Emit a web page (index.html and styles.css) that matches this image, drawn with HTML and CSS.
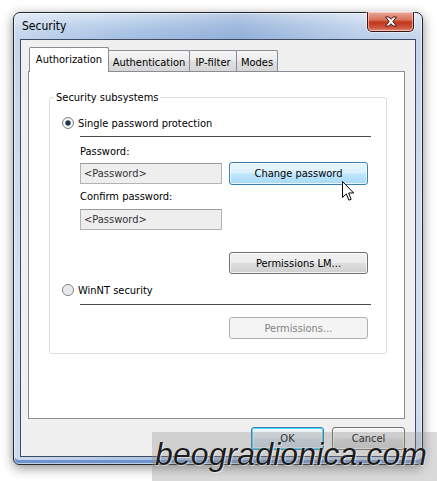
FILE: index.html
```html
<!DOCTYPE html>
<html>
<head>
<meta charset="utf-8">
<link rel="stylesheet" href="styles.css">
</head>
<body>
<div class="window">
  <div class="titlebar">
    <span class="title">Security</span>
    <div class="close">
      <svg width="14" height="11" viewBox="0 0 14 11"><path d="M1.5 1 H5 L7 3.3 L9 1 H12.5 L8.8 5.5 L12.5 10 H9 L7 7.7 L5 10 H1.5 L5.2 5.5 Z" fill="#fff" stroke="#4a1a12" stroke-width="1" stroke-linejoin="round"/></svg>
    </div>
  </div>
  <div class="client">
    <div class="tabs">
      <div class="tab active">Authorization</div>
      <div class="tab w-auth">Authentication</div>
      <div class="tab w-ip">IP-filter</div>
      <div class="tab w-modes">Modes</div>
    </div>
    <div class="panel">
      <fieldset class="group">
        <legend>Security subsystems</legend>
        <div class="radio-row first">
          <svg class="radio" width="12" height="12" viewBox="0 0 12 12"><circle cx="6" cy="6" r="5.5" fill="#f3f3f3" stroke="#7d7f82"/><circle cx="6" cy="6" r="3.6" fill="#fff"/><circle cx="6" cy="6" r="2.7" fill="#1f3550"/></svg>
          <span>Single password protection</span>
        </div>
        <div class="sep"></div>
        <div class="sub">
          <div class="label l1">Password:</div>
          <div class="input i1">&lt;Password&gt;</div>
          <button class="btn hover b1">Change password</button>
          <div class="label l2">Confirm password:</div>
          <div class="input i2">&lt;Password&gt;</div>
          <button class="btn b2">Permissions LM...</button>
        </div>
        <div class="radio-row second">
          <svg class="radio" width="12" height="12" viewBox="0 0 12 12"><circle cx="6" cy="6" r="5.5" fill="#f1f1f1" stroke="#7d7f82"/><circle cx="6" cy="6" r="3.8" fill="#e6e6e6"/></svg>
          <span>WinNT security</span>
        </div>
        <div class="sep sep2"></div>
        <button class="btn disabled b3">Permissions...</button>
      </fieldset>
    </div>
    <div class="footer">
      <button class="btn default small">OK</button>
      <button class="btn small">Cancel</button>
    </div>
  </div>
</div>
<svg class="cursor" width="13" height="21" viewBox="0 0 13 21"><path d="M0.5 0.5 V16.5 L4.3 12.9 L6.9 19.2 L9.2 18.2 L6.6 12 H11.7 Z" fill="#fff" stroke="#000" stroke-width="1" stroke-linejoin="miter"/></svg>
<div class="watermark"><span>beogradionica.com</span></div>
</body>
</html>
```

FILE: styles.css
```css
html, body {
  margin: 0;
}
body {
  width: 437px;
  height: 481px;
  box-sizing: border-box;
  padding: 12px 0 0 13px;
  background: #fff;
  font-family: "DejaVu Sans Condensed", "DejaVu Sans", sans-serif;
  font-size: 11px;
  color: #000;
  position: relative;
  overflow: hidden;
}
.window {
  width: 410px;
  height: 453px;
  box-sizing: border-box;
  border: 1px solid #23282f;
  border-radius: 7px 7px 6px 6px;
  padding: 0 6px 7px 6px;
  display: flex;
  flex-direction: column;
  background:
    linear-gradient(90deg, rgba(255,255,255,0.35) 0%, rgba(255,255,255,0) 25%, rgba(60,100,170,0.18) 55%, rgba(255,255,255,0.2) 85%, rgba(255,255,255,0.35) 100%),
    linear-gradient(180deg, #d6e3f3 0px, #b4cbe8 14px, #a6c0e3 26px, #bcd0ea 60%, #b2c8e7 100%);
  box-shadow: 0 3px 12px rgba(0,0,0,0.45), inset 0 0 0 1px rgba(255,255,255,0.55), inset 0 -4px 0 #6f94cd;
}
.titlebar {
  height: 26px;
  display: flex;
  justify-content: space-between;
  align-items: flex-start;
  padding-left: 2px;
}
.title {
  line-height: 26px;
  font-size: 12px;
  color: #000;
}
.close {
  width: 47px;
  height: 20px;
  box-sizing: border-box;
  margin-top: -1px;
  margin-right: 2px;
  border: 1px solid #3b1610;
  border-top: none;
  border-radius: 0 0 5px 5px;
  background: linear-gradient(180deg, #e9a99a 0%, #d9735d 40%, #c2361b 55%, #cf5a42 85%, #e39a88 100%);
  box-shadow: inset 0 0 0 1px rgba(255,220,210,0.6), 0 0 0 1px rgba(255,255,255,0.5);
  display: flex;
  align-items: center;
  justify-content: center;
}
.client {
  height: 418px;
  box-sizing: border-box;
  border: 1px solid #3e4c63;
  background: #f0f0f0;
  padding: 7px 10px 0 7px;
  display: flex;
  flex-direction: column;
}
.tabs {
  height: 24px;
  display: flex;
  align-items: flex-end;
  padding-left: 1px;
}
.tab {
  box-sizing: border-box;
  height: 21px;
  border: 1px solid #898c95;
  border-bottom: none;
  border-radius: 2px 2px 0 0;
  background: linear-gradient(180deg, #f6f6f6 0%, #ececec 45%, #dedede 55%, #d6d6d6 100%);
  display: flex;
  align-items: center;
  justify-content: center;
  padding-top: 2px;
  margin-right: -1px;
}
.tab.active {
  width: 80px;
  height: 25px;
  margin-bottom: -1px;
  background: #fff;
  position: relative;
  z-index: 1;
  padding-top: 0;
  padding-bottom: 2px;
}
.w-auth { width: 82px; }
.w-ip { width: 48px; }
.w-modes { width: 42px; }
.panel {
  height: 348px;
  box-sizing: border-box;
  border: 1px solid #898c95;
  background: #fff;
  padding: 19px 17px 0 20px;
}
.group {
  margin: 0;
  padding: 0 15px 14px 0;
  border: 1px solid #d5dfe5;
  border-radius: 3px;
  min-width: 0;
}
.group legend {
  margin-left: 4px;
  padding: 0 2px;
  line-height: 13px;
}
.radio-row {
  display: flex;
  align-items: center;
  gap: 4px;
  height: 14px;
  margin-left: 12px;
}
.radio-row.first { margin-top: 12px; }
.radio-row.second { margin-top: 9px; }
.radio { flex: none; }
.sep {
  height: 1px;
  background: #4a4a4a;
  margin: 6px 0 0 30px;
  width: 291px;
}
.sep.sep2 { margin-top: 7px; }
.sub {
  margin-left: 30px;
  display: grid;
  grid-template-columns: 142px 139px;
  column-gap: 7px;
  align-items: start;
}
.label {
  grid-column: 1 / -1;
  line-height: 14px;
  height: 14px;
}
.l1 { margin-top: 8px; }
.l2 { margin-top: 5px; }
.input {
  height: 21px;
  box-sizing: border-box;
  border: 1px solid #b3b3b3;
  border-top-color: #9a9a9a;
  background: #eeeeee;
  color: #333;
  padding-left: 3px;
  line-height: 19px;
}
.i1 { margin-top: 4px; }
.i2 { margin-top: 5px; grid-column: 1; }
.btn {
  box-sizing: border-box;
  width: 139px;
  height: 22px;
  margin: 0;
  padding: 0;
  font: inherit;
  color: #000;
  border: 1px solid #707070;
  border-radius: 3px;
  background: linear-gradient(180deg, #f2f2f2 0%, #ebebeb 48%, #dddddd 52%, #cfcfcf 100%);
  box-shadow: inset 0 0 0 1px rgba(255,255,255,0.75);
}
.btn.hover {
  border-color: #3c7fb1;
  background: linear-gradient(180deg, #eaf6fd 0%, #d9f0fc 48%, #bee6fd 52%, #a7d9f5 100%);
  height: 23px;
}
.btn.disabled {
  border-color: #adb2b5;
  background: #f4f4f4;
  color: #838383;
  box-shadow: none;
}
.b1 { grid-column: 2; grid-row: 2; margin-top: 3px; }
.b2 { grid-column: 2; grid-row: 5; margin-top: 22px; }
.b3 { display: block; margin: 12px 0 0 179px; }
.footer {
  margin-top: 8px;
  display: flex;
  justify-content: flex-end;
  gap: 8px;
}
.btn.small {
  width: 73px;
  height: 23px;
}
.btn.default {
  border-color: #3c7fb1;
  box-shadow: inset 0 0 0 1px #48d7fb, inset 0 0 0 2px rgba(255,255,255,0.5);
  background: linear-gradient(180deg, #eef3f7 0%, #e3ebf1 48%, #d3dfe8 52%, #c7d6e2 100%);
}
.cursor {
  position: absolute;
  left: 342px;
  top: 181px;
}
.watermark {
  position: absolute;
  left: 152px;
  top: 432px;
  right: 0;
  bottom: 0;
  background: rgba(140,140,140,0.32);
}
.watermark span {
  position: absolute;
  left: 3px;
  top: 2px;
  font-family: "Liberation Sans", Arial, sans-serif;
  font-style: italic;
  font-size: 32px;
  line-height: 40px;
  color: #1c1c1c;
  letter-spacing: 0.1px;
  text-shadow: 0 0 1px #fff, 1px 1px 0 rgba(255,255,255,0.5);
}
```
